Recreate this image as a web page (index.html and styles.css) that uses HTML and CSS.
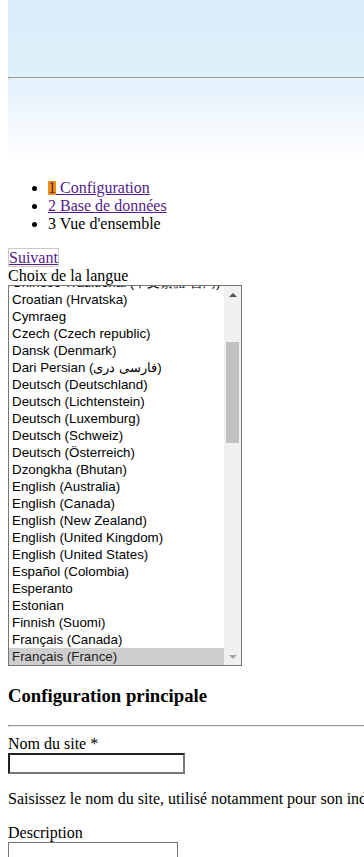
FILE: index.html
```html
<!DOCTYPE html>
<html lang="fr">
<head>
    <meta charset="UTF-8">
    <meta name="viewport" content="width=device-width, initial-scale=1.0">
    <title>Installation</title>
    <link rel="stylesheet" href="styles.css">
</head>
<body>
    <div class="page">
        <div class="header">
            <hr class="header-rule">
        </div>

        <ul class="steps">
            <li><a href="#"><span class="step-num">1</span> Configuration</a></li>
            <li><a href="#">2 Base de données</a></li>
            <li>3 Vue d'ensemble</li>
        </ul>

        <div class="nav">
            <a href="#" class="next-link">Suivant</a>
        </div>

        <div class="lang-label">Choix de la langue</div>
        <div class="listbox" role="listbox">
            <div class="listbox-view">
                <ul class="listbox-items">
                    <li>Chinese Traditional (中文繁體 台灣)</li>
                    <li>Croatian (Hrvatska)</li>
                    <li>Cymraeg</li>
                    <li>Czech (Czech republic)</li>
                    <li>Dansk (Denmark)</li>
                    <li>Dari Persian (فارسی دری)</li>
                    <li>Deutsch (Deutschland)</li>
                    <li>Deutsch (Lichtenstein)</li>
                    <li>Deutsch (Luxemburg)</li>
                    <li>Deutsch (Schweiz)</li>
                    <li>Deutsch (Österreich)</li>
                    <li>Dzongkha (Bhutan)</li>
                    <li>English (Australia)</li>
                    <li>English (Canada)</li>
                    <li>English (New Zealand)</li>
                    <li>English (United Kingdom)</li>
                    <li>English (United States)</li>
                    <li>Español (Colombia)</li>
                    <li>Esperanto</li>
                    <li>Estonian</li>
                    <li>Finnish (Suomi)</li>
                    <li>Français (Canada)</li>
                    <li class="selected" aria-selected="true">Français (France)</li>
                </ul>
            </div>
            <div class="scrollbar">
                <div class="scroll-btn"><span class="arrow-up"></span></div>
                <div class="scroll-track">
                    <div class="scroll-thumb"></div>
                </div>
                <div class="scroll-btn"><span class="arrow-down"></span></div>
            </div>
        </div>

        <h3>Configuration principale</h3>
        <hr>

        <div class="field">
            <label for="site-name">Nom du site *</label>
            <input type="text" id="site-name" class="input-strong">
            <p>Saisissez le nom du site, utilisé notamment pour son indexation par les moteurs de recherche et dans le titre des pages.</p>
        </div>

        <div class="field">
            <label for="site-desc">Description</label>
            <textarea id="site-desc" class="input-plain"></textarea>
        </div>
    </div>
</body>
</html>
```

FILE: styles.css
```css
html {
    overflow: hidden;
    scrollbar-width: none;
}

body {
    margin: 0 0 8px 8px;
    font-family: "Liberation Serif", "Times New Roman", serif;
    font-size: 16px;
    color: #000;
    background: #fff;
}

.page {
    width: 960px;
}

/* bandeau du haut */
.header {
    height: 163px;
    padding-top: 77px;
    box-sizing: border-box;
    background: linear-gradient(#d7ecf8 0%, #e0f0fa 45%, #ebf4fd 62%, #f6fafe 82%, #ffffff 100%);
}

.header-rule {
    margin: 0;
}

a {
    color: #551a8b;
}

/* étapes */
.steps {
    margin: 16px 0;
    padding-left: 40px;
}

.step-num {
    display: inline-block;
    line-height: 14px;
    background: #f39200;
}

.next-link {
    border: 1px solid #c8c8c8;
}

/* liste des langues */
.listbox {
    display: flex;
    width: 234px;
    height: 381px;
    box-sizing: border-box;
    border: 1px solid #767676;
    background: #fff;
    font-family: "Liberation Sans", Arial, sans-serif;
    font-size: 13.33px;
    color: #000;
}

.listbox-view {
    flex: 1;
    overflow: hidden;
}

.listbox-items {
    list-style: none;
    margin: -12px 0 0;
    padding: 0;
}

.listbox-items li {
    height: 17px;
    line-height: 17px;
    padding: 0 3px;
    white-space: nowrap;
}

.listbox-items li.selected {
    background: #cecece;
    color: #222;
}

.scrollbar {
    width: 17px;
    display: flex;
    flex-direction: column;
    background: #f0f0f0;
}

.scroll-btn {
    height: 17px;
    display: flex;
    align-items: center;
    justify-content: center;
}

.arrow-up,
.arrow-down {
    width: 0;
    height: 0;
    border-left: 4px solid transparent;
    border-right: 4px solid transparent;
}

.arrow-up {
    border-bottom: 4px solid #505050;
}

.arrow-down {
    border-top: 4px solid #a3a3a3;
}

.scroll-track {
    flex: 1;
    padding: 39px 2px 0;
}

.scroll-thumb {
    height: 101px;
    background: #c1c1c1;
}

h3 {
    font-size: 18.72px;
    margin: 18.72px 0;
}

.field label {
    display: block;
}

.field p {
    margin: 16px 0;
    white-space: nowrap;
}

.input-strong {
    width: 177px;
    height: 21px;
    box-sizing: border-box;
    margin: 0;
    border: 2px solid;
    border-color: #222 #777 #777 #222;
}

.input-plain {
    display: block;
    width: 170px;
    height: 30px;
    box-sizing: border-box;
    margin: 0;
    border: 1px solid #767676;
    resize: none;
}
```
